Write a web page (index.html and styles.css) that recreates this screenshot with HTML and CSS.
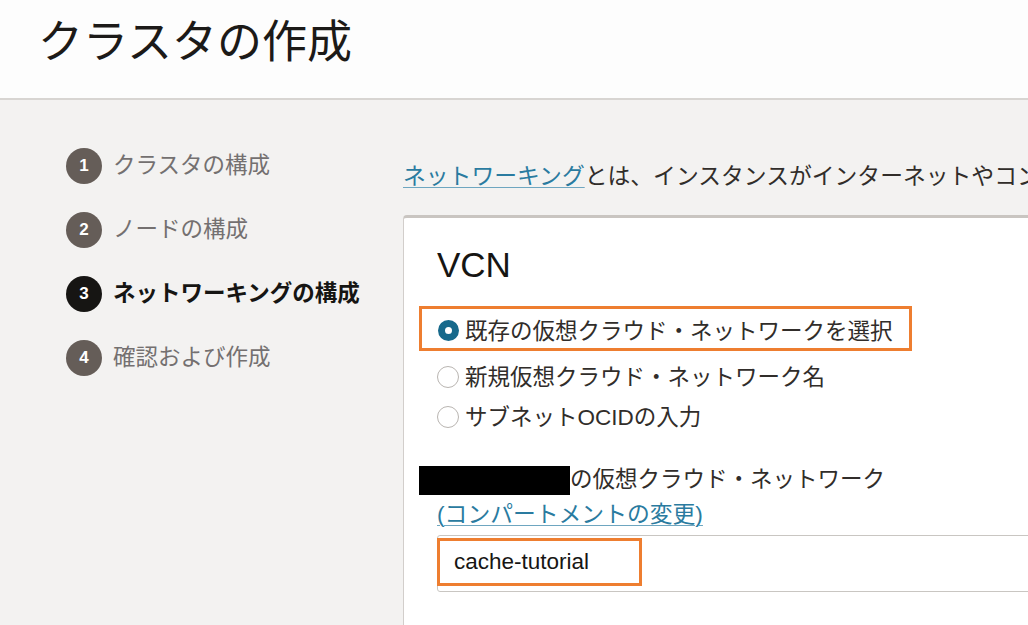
FILE: index.html
```html
<!DOCTYPE html>
<html lang="ja">
<head>
<meta charset="utf-8">
<title>クラスタの作成</title>
<link rel="stylesheet" href="styles.css">
</head>
<body>
<header class="header">
  <h1 class="title">クラスタの作成</h1>
</header>
<main class="main">
  <nav class="steps">
    <div class="step"><span class="num">1</span><span class="label">クラスタの構成</span></div>
    <div class="step"><span class="num">2</span><span class="label">ノードの構成</span></div>
    <div class="step active"><span class="num">3</span><span class="label">ネットワーキングの構成</span></div>
    <div class="step"><span class="num">4</span><span class="label">確認および作成</span></div>
  </nav>
  <section class="content">
    <p class="intro"><a class="link" href="#">ネットワーキング</a>とは、インスタンスがインターネットやコンパートメント内の他のリソースと通信する方法です。</p>
    <div class="card">
      <h2 class="card-title">VCN</h2>
      <div class="options">
        <label class="option highlight"><span class="radio checked"></span>既存の仮想クラウド・ネットワークを選択</label>
        <label class="option"><span class="radio"></span>新規仮想クラウド・ネットワーク名</label>
        <label class="option"><span class="radio"></span>サブネットOCIDの入力</label>
      </div>
      <div class="field-label"><span class="redact"></span>の仮想クラウド・ネットワーク</div>
      <a class="link change" href="#">(コンパートメントの変更)</a>
      <div class="select"><span class="value">cache-tutorial</span></div>
    </div>
  </section>
</main>
</body>
</html>
```

FILE: styles.css
```css
html, body {
  margin: 0;
  padding: 0;
}
body {
  background: #f3f2f1;
  font-family: "Liberation Sans", "Noto Sans CJK JP", sans-serif;
  color: #312d2a;
  overflow: hidden;
  width: 1028px;
  height: 625px;
}
.header {
  background: #fdfdfd;
  border-bottom: 2px solid #d8d5d2;
  padding: 15px 0 0 38px;
  box-sizing: content-box;
  height: 83px;
}
.title {
  margin: 0;
  font-weight: 400;
  font-size: 45px;
  line-height: 48px;
  color: #1c1a18;
  font-family: "Noto Sans CJK JP", sans-serif;
}
.main {
  display: flex;
  align-items: flex-start;
}
.steps {
  width: 403px;
  flex: none;
  box-sizing: border-box;
  padding: 48px 0 0 66px;
  display: flex;
  flex-direction: column;
  gap: 28px;
}
.step {
  display: flex;
  align-items: center;
  gap: 11px;
  height: 36px;
}
.num {
  width: 36px;
  height: 36px;
  border-radius: 50%;
  background: #655d58;
  color: #fff;
  font-weight: 700;
  font-size: 17px;
  display: flex;
  align-items: center;
  justify-content: center;
  flex: none;
}
.label {
  font-family: "Noto Sans CJK JP", sans-serif;
  font-size: 22.5px;
  color: #747070;
  line-height: 30px;
  margin-top: -6px;
}
.step.active .num {
  background: #161513;
}
.step.active .label {
  color: #161513;
  font-weight: 700;
}
.content {
  flex: none;
  width: 760px;
  padding-top: 61px;
}
.intro {
  margin: 0;
  font-size: 22.8px;
  line-height: 30px;
  white-space: nowrap;
  color: #312d2a;
}
.link {
  color: #2a7ba0;
  text-decoration: underline;
  text-decoration-color: #6ea6c0;
  text-underline-offset: 3px;
  text-decoration-thickness: 1px;
}
.card {
  margin-top: 24px;
  background: #fff;
  border-top: 3px solid #c9c5c1;
  border-left: 1px solid #d2cecb;
  border-top-left-radius: 4px;
  padding: 26px 0 60px 33px;
}
.card-title {
  margin: 0;
  font-weight: 400;
  font-size: 35px;
  line-height: 42px;
  color: #161513;
}
.options {
  margin-top: 20px;
  display: flex;
  flex-direction: column;
  align-items: flex-start;
}
.option {
  display: flex;
  align-items: center;
  gap: 6px;
  height: 40px;
  font-size: 22.5px;
  color: #312d2a;
  white-space: nowrap;
}
.option.highlight {
  height: 45px;
  box-sizing: border-box;
  border: 3px solid #ee7e30;
  margin-left: -18px;
  padding: 0 16px 0 16px;
  margin-bottom: 4px;
}
.radio {
  width: 22px;
  height: 22px;
  box-sizing: border-box;
  border-radius: 50%;
  border: 1px solid #b9b5b1;
  background: #fff;
  flex: none;
  margin-top: 3px;
}
.radio.checked {
  width: 21px;
  height: 21px;
  border: 7px solid #17698b;
  background: #fff;
}
.field-label {
  margin-top: 30px;
  font-size: 22.5px;
  line-height: 30px;
  display: flex;
  align-items: center;
  margin-left: -18px;
  color: #312d2a;
}
.redact {
  display: inline-block;
  width: 151px;
  height: 29px;
  background: #000;
}
.change {
  display: inline-block;
  margin-top: 4px;
  font-size: 22.8px;
  line-height: 30px;
}
.select {
  margin-top: 6px;
  height: 57px;
  box-sizing: border-box;
  border: 1px solid #c9c6c2;
  border-radius: 3px;
  padding-top: 2px;
  background: #fff;
}
.value {
  display: flex;
  align-items: center;
  width: 205px;
  height: 48px;
  box-sizing: border-box;
  border: 3px solid #ee7e30;
  margin-left: -1px;
  padding-left: 14px;
  font-size: 22.5px;
  color: #161513;
}
```
